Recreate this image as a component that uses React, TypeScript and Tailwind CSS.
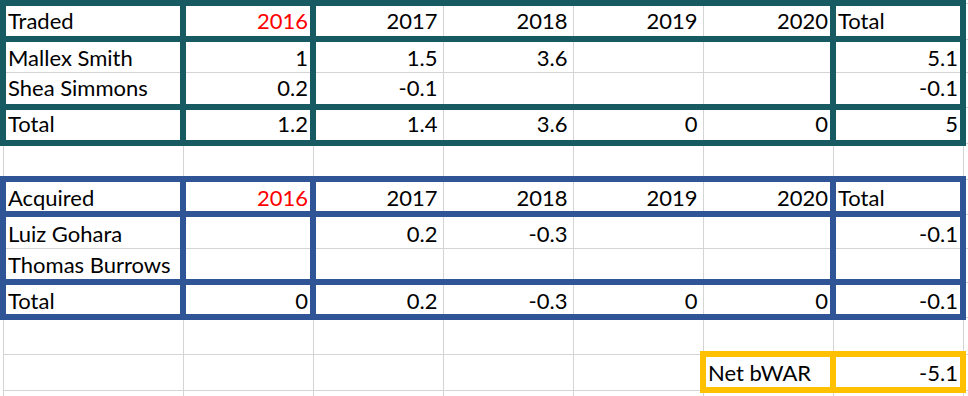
import React from 'react';

type Line = 'g' | 't' | 'b' | 'y';

const LEFT: Record<Line, string> = {
  g: 'border-l border-l-[#d4d4d4] pl-[4px]',
  t: 'border-l-[6px] border-l-[#185a62] pl-[2px]',
  b: 'border-l-[6px] border-l-[#2f5597] pl-[2px]',
  y: 'border-l-[6px] border-l-[#ffc000] pl-[2px]',
};
const RIGHT: Record<Line, string> = {
  g: 'border-r border-r-[#d4d4d4] pr-[5px]',
  t: 'border-r-[6px] border-r-[#185a62] pr-[2px]',
  b: 'border-r-[6px] border-r-[#2f5597] pr-[2px]',
  y: 'border-r-[6px] border-r-[#ffc000] pr-[2px]',
};
const TOP: Record<Line, string> = {
  g: 'border-t border-t-[#d4d4d4]',
  t: 'border-t-[6px] border-t-[#185a62]',
  b: 'border-t-[6px] border-t-[#2f5597]',
  y: 'border-t-[6px] border-t-[#ffc000]',
};
const BOTTOM: Record<Line, string> = {
  g: 'border-b border-b-[#d4d4d4]',
  t: 'border-b-[6px] border-b-[#185a62]',
  b: 'border-b-[6px] border-b-[#2f5597]',
  y: 'border-b-[6px] border-b-[#ffc000]',
};

// line above row k, in column c
function hLine(k: number, c: number): Line {
  if (c <= 6 && [0, 1, 3, 4].includes(k)) return 't';
  if (c <= 6 && [5, 6, 8, 9].includes(k)) return 'b';
  if ((c === 5 || c === 6) && (k === 10 || k === 11)) return 'y';
  return 'g';
}

// line left of column k, in row r
function vLine(r: number, k: number): Line {
  if (r <= 3 && [0, 1, 2, 6, 7].includes(k)) return 't';
  if (r >= 5 && r <= 8 && [0, 1, 2, 6, 7].includes(k)) return 'b';
  if (r === 10 && [5, 6, 7].includes(k)) return 'y';
  return 'g';
}

type Cell = string | { text: string; red?: boolean; left?: boolean };

interface Row {
  h: string;
  pb: string;
  cells: Cell[];
}

const rows: Row[] = [
  { h: 'h-[36px]', pb: 'pb-[4px]', cells: [{ text: 'Traded', left: true }, { text: '2016', red: true }, '2017', '2018', '2019', '2020', { text: 'Total', left: true }] },
  { h: 'h-[33px]', pb: 'pb-[3px]', cells: [{ text: 'Mallex Smith', left: true }, '1', '1.5', '3.6', '', '', '5.1'] },
  { h: 'h-[35px]', pb: 'pb-[5px]', cells: [{ text: 'Shea Simmons', left: true }, '0.2', '-0.1', '', '', '', '-0.1'] },
  { h: 'h-[36px]', pb: 'pb-[5px]', cells: [{ text: 'Total', left: true }, '1.2', '1.4', '3.6', '0', '0', '5'] },
  { h: 'h-[36px]', pb: 'pb-[3px]', cells: [] },
  { h: 'h-[35px]', pb: 'pb-[2px]', cells: [{ text: 'Acquired', left: true }, { text: '2016', red: true }, '2017', '2018', '2019', '2020', { text: 'Total', left: true }] },
  { h: 'h-[34px]', pb: 'pb-[3px]', cells: [{ text: 'Luiz Gohara', left: true }, '', '0.2', '-0.3', '', '', '-0.1'] },
  { h: 'h-[34px]', pb: 'pb-[3px]', cells: [{ text: 'Thomas Burrows', left: true }, '', '', '', '', '', ''] },
  { h: 'h-[35px]', pb: 'pb-[2px]', cells: [{ text: 'Total', left: true }, '0', '0.2', '-0.3', '0', '0', '-0.1'] },
  { h: 'h-[37px]', pb: 'pb-[3px]', cells: [] },
  { h: 'h-[36px]', pb: 'pb-[3px]', cells: ['', '', '', '', '', { text: 'Net bWAR', left: true }, '-5.1'] },
  { h: 'h-[36px]', pb: 'pb-[3px]', cells: [] },
];

const widths = ['w-[180px]', 'w-[130px]', 'w-[130px]', 'w-[130px]', 'w-[130px]', 'w-[130px]', 'w-[130px]', 'w-[40px]'];

export default function App() {
  return (
    <div className="w-[968px] h-[396px] overflow-hidden bg-white">
      <div className="w-[1200px]">
        <table
          className="table-fixed w-[1000px] border-collapse text-[22px] leading-[22px] text-black"
          style={{ fontFamily: 'Lato, "Open Sans", sans-serif' }}
        >
          <colgroup>
            {widths.map((w, i) => (
              <col key={i} className={w} />
            ))}
          </colgroup>
          <tbody>
            {rows.map((row, r) => (
              <tr key={r} className={row.h}>
                {widths.map((_, c) => {
                  const cell = row.cells[c] ?? '';
                  const text = typeof cell === 'string' ? cell : cell.text;
                  const red = typeof cell !== 'string' && cell.red;
                  const left = typeof cell !== 'string' && cell.left;
                  return (
                    <td
                      key={c}
                      className={`p-0 align-bottom whitespace-nowrap overflow-hidden ${row.pb} ${
                        LEFT[vLine(r, c)]
                      } ${RIGHT[vLine(r, c + 1)]} ${TOP[hLine(r, c)]} ${BOTTOM[hLine(r + 1, c)]} ${
                        left ? 'text-left' : 'text-right'
                      } ${red ? 'text-[#ff0000]' : ''}`}
                    >
                      {text}
                    </td>
                  );
                })}
              </tr>
            ))}
          </tbody>
        </table>
      </div>
    </div>
  );
}
